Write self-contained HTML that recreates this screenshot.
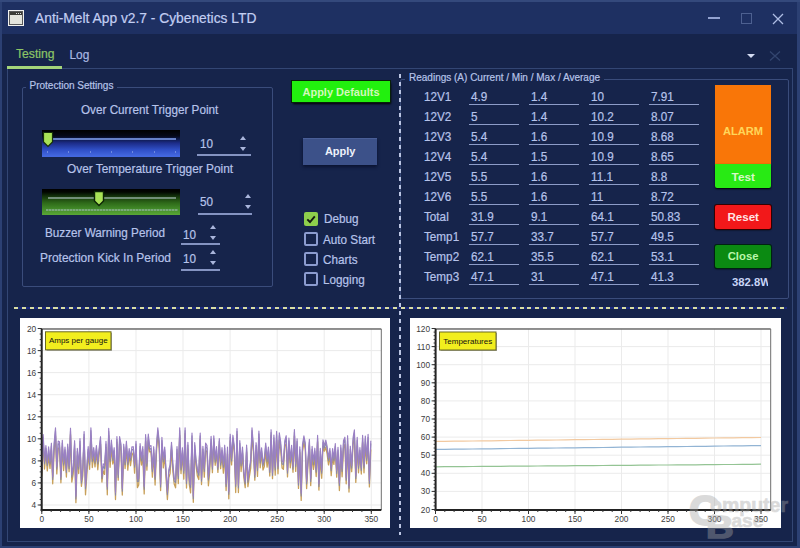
<!DOCTYPE html>
<html><head><meta charset="utf-8">
<style>
*{margin:0;padding:0;box-sizing:border-box}
html,body{width:800px;height:548px;overflow:hidden;background:#2c4073}
body{position:relative;font-family:"Liberation Sans",sans-serif}
.a{position:absolute}
.t{position:absolute;white-space:nowrap;line-height:1;-webkit-text-stroke:0.2px currentColor}
.t[style*="bold"]{-webkit-text-stroke:0}
.arr{position:absolute;width:0;height:0;border-left:3.5px solid transparent;border-right:3.5px solid transparent}
.up{border-bottom:4px solid #aab6dc}
.dn{border-top:4px solid #aab6dc}
</style></head><body>
<div class="a" style="left:0px;top:0px;width:800px;height:548px;background:#2c4073"></div>
<div class="a" style="left:2px;top:2px;width:795px;height:544px;background:#16244b"></div>
<div class="a" style="left:2px;top:2px;width:795px;height:32px;background:#1e3062"></div>
<div class="a" style="left:0px;top:0px;width:800px;height:2px;background:#34497c"></div>
<div class="a" style="left:8px;top:10px;width:16px;height:16px;background:#f2f2f0"></div>
<div class="a" style="left:9px;top:11px;width:14px;height:14px;background:#e4e4dc;border:1px solid #5a5a5a"></div>
<div class="a" style="left:10px;top:12px;width:12px;height:3px;background:#3c3c36"></div>
<div class="a" style="left:16px;top:13px;width:1px;height:1px;background:#ddd"></div><div class="a" style="left:18px;top:13px;width:1px;height:1px;background:#ddd"></div><div class="a" style="left:20px;top:13px;width:1px;height:1px;background:#ddd"></div>
<div class="t" style="left:35px;top:12px;font-size:13.8px;color:#c2cef2;">Anti-Melt App v2.7 - Cybenetics LTD</div>
<div class="a" style="left:708px;top:17px;width:12px;height:1.5px;background:#93a2d0"></div>
<div class="a" style="left:741px;top:13px;width:11px;height:11px;border:1px solid #4d6090"></div>
<svg class="a" style="left:772px;top:13px" width="12" height="12"><path d="M1 1L11 11M11 1L1 11" stroke="#aebde4" stroke-width="1.3"/></svg>
<div class="t" style="left:16px;top:48px;font-size:12.2px;color:#8cc466;">Testing</div>
<div class="t" style="left:69.5px;top:50px;font-size:11.9px;color:#aab8e2;">Log</div>
<div class="a" style="left:7px;top:68px;width:786px;height:474px;border:1px solid #334674"></div>
<div class="a" style="left:7px;top:66px;width:55px;height:2.5px;background:#a4d47a"></div>
<div class="a" style="left:747px;top:54px;width:0;height:0;border-left:4px solid transparent;border-right:4px solid transparent;border-top:4.5px solid #d4dcf2"></div>
<svg class="a" style="left:769px;top:51px" width="12" height="10"><path d="M1 0.5L11 9.5M11 0.5L1 9.5" stroke="#33456f" stroke-width="1.3"/></svg>
<div class="a" style="left:22px;top:87px;width:251px;height:200px;border:1px solid #3a4c7b;border-radius:2px"></div>
<div class="a" style="left:26px;top:80px;width:91px;height:10px;background:#16244b"></div>
<div class="t" style="left:29.5px;top:81px;font-size:10px;color:#b6c3e8;">Protection Settings</div>
<div class="t" style="left:80.5px;top:104px;font-size:12.4px;color:#b6c3ea;transform:scaleX(0.945);transform-origin:0 0;">Over Current Trigger Point</div>
<div class="a" style="left:42px;top:130px;width:138px;height:27px;background:linear-gradient(#000 0px,#050818 6px,#0d1848 9px,#1c2c88 13px,#3050c8 20px,#4468e0 26px)"></div>
<div class="a" style="left:52px;top:138px;width:124px;height:2px;background:#6680c8"></div>
<div class="a" style="left:47.0px;top:151px;width:1px;height:2px;background:#6f8ae0"></div>
<div class="a" style="left:68.3px;top:151px;width:1px;height:2px;background:#6f8ae0"></div>
<div class="a" style="left:89.6px;top:151px;width:1px;height:2px;background:#6f8ae0"></div>
<div class="a" style="left:110.9px;top:151px;width:1px;height:2px;background:#6f8ae0"></div>
<div class="a" style="left:132.2px;top:151px;width:1px;height:2px;background:#6f8ae0"></div>
<div class="a" style="left:153.5px;top:151px;width:1px;height:2px;background:#6f8ae0"></div>
<div class="a" style="left:174.8px;top:151px;width:1px;height:2px;background:#6f8ae0"></div>
<svg class="a" style="left:42px;top:131px" width="12" height="17"><path d="M1.5 1.5H10.5V11L6 15.5L1.5 11Z" fill="#a8e256" stroke="#16300a" stroke-width="1.2"/></svg>
<div class="t" style="left:199.6px;top:138px;font-size:12.4px;color:#b6c3ea;transform:scaleX(0.945);transform-origin:0 0;">10</div>
<div class="arr up" style="left:240px;top:136px"></div><div class="arr dn" style="left:240px;top:147px"></div>
<div class="a" style="left:197px;top:154px;width:54px;height:1.5px;background:#8594c2"></div>
<div class="t" style="left:67px;top:163px;font-size:12.4px;color:#b6c3ea;transform:scaleX(0.958);transform-origin:0 0;">Over Temperature Trigger Point</div>
<div class="a" style="left:42px;top:189px;width:138px;height:26px;background:linear-gradient(#000 0px,#020600 3px,#12300a 7px,#1f4a10 10px,#2e6a1a 14px,#3f8626 19px,#5aa836 26px)"></div>
<div class="a" style="left:48px;top:197px;width:128px;height:2px;background:#728e78"></div>
<div class="a" style="left:46px;top:209px;width:132px;height:2px;background:repeating-linear-gradient(90deg,#7aa87a 0 2px,#5f9a58 2px 3px)"></div>
<svg class="a" style="left:93px;top:190px" width="12" height="17"><path d="M1.5 1.5H10.5V11L6 15.5L1.5 11Z" fill="#a8e256" stroke="#0c2406" stroke-width="1.4"/></svg>
<div class="t" style="left:199.6px;top:196px;font-size:12.4px;color:#b6c3ea;transform:scaleX(0.945);transform-origin:0 0;">50</div>
<div class="arr up" style="left:245px;top:194px"></div><div class="arr dn" style="left:245px;top:205px"></div>
<div class="a" style="left:198px;top:213px;width:54px;height:1.5px;background:#8594c2"></div>
<div class="t" style="left:45.3px;top:227px;font-size:12.4px;color:#b6c3ea;transform:scaleX(0.945);transform-origin:0 0;">Buzzer Warning Period</div>
<div class="t" style="left:182.5px;top:229px;font-size:12.4px;color:#b6c3ea;transform:scaleX(0.945);transform-origin:0 0;">10</div>
<div class="arr up" style="left:210px;top:225px"></div><div class="arr dn" style="left:210px;top:236px"></div>
<div class="a" style="left:181px;top:243px;width:39px;height:1.5px;background:#8594c2"></div>
<div class="t" style="left:40px;top:252px;font-size:12.4px;color:#b6c3ea;transform:scaleX(0.965);transform-origin:0 0;">Protection Kick In Period</div>
<div class="t" style="left:182.5px;top:253px;font-size:12.4px;color:#b6c3ea;transform:scaleX(0.945);transform-origin:0 0;">10</div>
<div class="arr up" style="left:210px;top:250px"></div><div class="arr dn" style="left:210px;top:261px"></div>
<div class="a" style="left:181px;top:269px;width:39px;height:1.5px;background:#8594c2"></div>
<div class="a" style="left:292px;top:81px;width:98px;height:21px;background:#22f00e;box-shadow:0 0 0 1px #08200a,1px 2px 2px #000"></div>
<div class="t" style="left:281px;width:120px;text-align:center;top:87px;font-size:11px;color:#d4f8bc;font-weight:bold;">Apply Defaults</div>
<div class="a" style="left:303px;top:138px;width:74px;height:27px;background:#3c5189;border-top:1px solid #4a5f98;box-shadow:0 2px 3px #0a1230"></div>
<div class="t" style="left:280.2px;width:120px;text-align:center;top:146px;font-size:11px;color:#eef2fb;font-weight:bold;">Apply</div>
<div class="a" style="left:304px;top:212px;width:14px;height:14px;background:#8ecf4c;border-radius:2px"></div>
<svg class="a" style="left:304px;top:212px" width="14" height="14"><path d="M3.3 7.3L6 10L10.8 4.3" fill="none" stroke="#151a10" stroke-width="1.9"/></svg>
<div class="t" style="left:323.5px;top:213px;font-size:12.4px;color:#b6c3ea;transform:scaleX(0.945);transform-origin:0 0;">Debug</div>
<div class="a" style="left:304px;top:232px;width:14px;height:14px;border:2px solid #8c9ccf;border-radius:2px"></div>
<div class="t" style="left:323.3px;top:234px;font-size:12.4px;color:#b6c3ea;transform:scaleX(0.945);transform-origin:0 0;">Auto Start</div>
<div class="a" style="left:304px;top:252px;width:14px;height:14px;border:2px solid #8c9ccf;border-radius:2px"></div>
<div class="t" style="left:323.3px;top:254px;font-size:12.4px;color:#b6c3ea;transform:scaleX(0.945);transform-origin:0 0;">Charts</div>
<div class="a" style="left:304px;top:272px;width:14px;height:14px;border:2px solid #8c9ccf;border-radius:2px"></div>
<div class="t" style="left:323.3px;top:274px;font-size:12.4px;color:#b6c3ea;transform:scaleX(0.945);transform-origin:0 0;">Logging</div>
<div class="a" style="left:400px;top:79px;width:389px;height:220px;border:1px solid #3a4c7b;border-radius:2px"></div>
<div class="a" style="left:405px;top:72px;width:199px;height:10px;background:#16244b"></div>
<div class="t" style="left:409px;top:73px;font-size:10px;color:#b6c3e8;">Readings (A) Current / Min / Max / Average</div>
<div class="t" style="left:423.6px;top:91px;font-size:12.4px;color:#b6c3ea;transform:scaleX(0.945);transform-origin:0 0;">12V1</div>
<div class="t" style="left:470.8px;top:91px;font-size:12.4px;color:#b6c3ea;transform:scaleX(0.945);transform-origin:0 0;">4.9</div>
<div class="a" style="left:468.5px;top:104.2px;width:50px;height:1.3px;background:#8d9cc8"></div>
<div class="t" style="left:530.8px;top:91px;font-size:12.4px;color:#b6c3ea;transform:scaleX(0.945);transform-origin:0 0;">1.4</div>
<div class="a" style="left:528.5px;top:104.2px;width:50px;height:1.3px;background:#8d9cc8"></div>
<div class="t" style="left:590.8px;top:91px;font-size:12.4px;color:#b6c3ea;transform:scaleX(0.945);transform-origin:0 0;">10</div>
<div class="a" style="left:588.5px;top:104.2px;width:50px;height:1.3px;background:#8d9cc8"></div>
<div class="t" style="left:650.8px;top:91px;font-size:12.4px;color:#b6c3ea;transform:scaleX(0.945);transform-origin:0 0;">7.91</div>
<div class="a" style="left:648.5px;top:104.2px;width:50px;height:1.3px;background:#8d9cc8"></div>
<div class="t" style="left:423.6px;top:111px;font-size:12.4px;color:#b6c3ea;transform:scaleX(0.945);transform-origin:0 0;">12V2</div>
<div class="t" style="left:470.8px;top:111px;font-size:12.4px;color:#b6c3ea;transform:scaleX(0.945);transform-origin:0 0;">5</div>
<div class="a" style="left:468.5px;top:124.2px;width:50px;height:1.3px;background:#8d9cc8"></div>
<div class="t" style="left:530.8px;top:111px;font-size:12.4px;color:#b6c3ea;transform:scaleX(0.945);transform-origin:0 0;">1.4</div>
<div class="a" style="left:528.5px;top:124.2px;width:50px;height:1.3px;background:#8d9cc8"></div>
<div class="t" style="left:590.8px;top:111px;font-size:12.4px;color:#b6c3ea;transform:scaleX(0.945);transform-origin:0 0;">10.2</div>
<div class="a" style="left:588.5px;top:124.2px;width:50px;height:1.3px;background:#8d9cc8"></div>
<div class="t" style="left:650.8px;top:111px;font-size:12.4px;color:#b6c3ea;transform:scaleX(0.945);transform-origin:0 0;">8.07</div>
<div class="a" style="left:648.5px;top:124.2px;width:50px;height:1.3px;background:#8d9cc8"></div>
<div class="t" style="left:423.6px;top:131px;font-size:12.4px;color:#b6c3ea;transform:scaleX(0.945);transform-origin:0 0;">12V3</div>
<div class="t" style="left:470.8px;top:131px;font-size:12.4px;color:#b6c3ea;transform:scaleX(0.945);transform-origin:0 0;">5.4</div>
<div class="a" style="left:468.5px;top:144.2px;width:50px;height:1.3px;background:#8d9cc8"></div>
<div class="t" style="left:530.8px;top:131px;font-size:12.4px;color:#b6c3ea;transform:scaleX(0.945);transform-origin:0 0;">1.6</div>
<div class="a" style="left:528.5px;top:144.2px;width:50px;height:1.3px;background:#8d9cc8"></div>
<div class="t" style="left:590.8px;top:131px;font-size:12.4px;color:#b6c3ea;transform:scaleX(0.945);transform-origin:0 0;">10.9</div>
<div class="a" style="left:588.5px;top:144.2px;width:50px;height:1.3px;background:#8d9cc8"></div>
<div class="t" style="left:650.8px;top:131px;font-size:12.4px;color:#b6c3ea;transform:scaleX(0.945);transform-origin:0 0;">8.68</div>
<div class="a" style="left:648.5px;top:144.2px;width:50px;height:1.3px;background:#8d9cc8"></div>
<div class="t" style="left:423.6px;top:151px;font-size:12.4px;color:#b6c3ea;transform:scaleX(0.945);transform-origin:0 0;">12V4</div>
<div class="t" style="left:470.8px;top:151px;font-size:12.4px;color:#b6c3ea;transform:scaleX(0.945);transform-origin:0 0;">5.4</div>
<div class="a" style="left:468.5px;top:164.2px;width:50px;height:1.3px;background:#8d9cc8"></div>
<div class="t" style="left:530.8px;top:151px;font-size:12.4px;color:#b6c3ea;transform:scaleX(0.945);transform-origin:0 0;">1.5</div>
<div class="a" style="left:528.5px;top:164.2px;width:50px;height:1.3px;background:#8d9cc8"></div>
<div class="t" style="left:590.8px;top:151px;font-size:12.4px;color:#b6c3ea;transform:scaleX(0.945);transform-origin:0 0;">10.9</div>
<div class="a" style="left:588.5px;top:164.2px;width:50px;height:1.3px;background:#8d9cc8"></div>
<div class="t" style="left:650.8px;top:151px;font-size:12.4px;color:#b6c3ea;transform:scaleX(0.945);transform-origin:0 0;">8.65</div>
<div class="a" style="left:648.5px;top:164.2px;width:50px;height:1.3px;background:#8d9cc8"></div>
<div class="t" style="left:423.6px;top:171px;font-size:12.4px;color:#b6c3ea;transform:scaleX(0.945);transform-origin:0 0;">12V5</div>
<div class="t" style="left:470.8px;top:171px;font-size:12.4px;color:#b6c3ea;transform:scaleX(0.945);transform-origin:0 0;">5.5</div>
<div class="a" style="left:468.5px;top:184.2px;width:50px;height:1.3px;background:#8d9cc8"></div>
<div class="t" style="left:530.8px;top:171px;font-size:12.4px;color:#b6c3ea;transform:scaleX(0.945);transform-origin:0 0;">1.6</div>
<div class="a" style="left:528.5px;top:184.2px;width:50px;height:1.3px;background:#8d9cc8"></div>
<div class="t" style="left:590.8px;top:171px;font-size:12.4px;color:#b6c3ea;transform:scaleX(0.945);transform-origin:0 0;">11.1</div>
<div class="a" style="left:588.5px;top:184.2px;width:50px;height:1.3px;background:#8d9cc8"></div>
<div class="t" style="left:650.8px;top:171px;font-size:12.4px;color:#b6c3ea;transform:scaleX(0.945);transform-origin:0 0;">8.8</div>
<div class="a" style="left:648.5px;top:184.2px;width:50px;height:1.3px;background:#8d9cc8"></div>
<div class="t" style="left:423.6px;top:191px;font-size:12.4px;color:#b6c3ea;transform:scaleX(0.945);transform-origin:0 0;">12V6</div>
<div class="t" style="left:470.8px;top:191px;font-size:12.4px;color:#b6c3ea;transform:scaleX(0.945);transform-origin:0 0;">5.5</div>
<div class="a" style="left:468.5px;top:204.2px;width:50px;height:1.3px;background:#8d9cc8"></div>
<div class="t" style="left:530.8px;top:191px;font-size:12.4px;color:#b6c3ea;transform:scaleX(0.945);transform-origin:0 0;">1.6</div>
<div class="a" style="left:528.5px;top:204.2px;width:50px;height:1.3px;background:#8d9cc8"></div>
<div class="t" style="left:590.8px;top:191px;font-size:12.4px;color:#b6c3ea;transform:scaleX(0.945);transform-origin:0 0;">11</div>
<div class="a" style="left:588.5px;top:204.2px;width:50px;height:1.3px;background:#8d9cc8"></div>
<div class="t" style="left:650.8px;top:191px;font-size:12.4px;color:#b6c3ea;transform:scaleX(0.945);transform-origin:0 0;">8.72</div>
<div class="a" style="left:648.5px;top:204.2px;width:50px;height:1.3px;background:#8d9cc8"></div>
<div class="t" style="left:423.6px;top:211px;font-size:12.4px;color:#b6c3ea;transform:scaleX(0.945);transform-origin:0 0;">Total</div>
<div class="t" style="left:470.8px;top:211px;font-size:12.4px;color:#b6c3ea;transform:scaleX(0.945);transform-origin:0 0;">31.9</div>
<div class="a" style="left:468.5px;top:224.2px;width:50px;height:1.3px;background:#8d9cc8"></div>
<div class="t" style="left:530.8px;top:211px;font-size:12.4px;color:#b6c3ea;transform:scaleX(0.945);transform-origin:0 0;">9.1</div>
<div class="a" style="left:528.5px;top:224.2px;width:50px;height:1.3px;background:#8d9cc8"></div>
<div class="t" style="left:590.8px;top:211px;font-size:12.4px;color:#b6c3ea;transform:scaleX(0.945);transform-origin:0 0;">64.1</div>
<div class="a" style="left:588.5px;top:224.2px;width:50px;height:1.3px;background:#8d9cc8"></div>
<div class="t" style="left:650.8px;top:211px;font-size:12.4px;color:#b6c3ea;transform:scaleX(0.945);transform-origin:0 0;">50.83</div>
<div class="a" style="left:648.5px;top:224.2px;width:50px;height:1.3px;background:#8d9cc8"></div>
<div class="t" style="left:423.6px;top:231px;font-size:12.4px;color:#b6c3ea;transform:scaleX(0.945);transform-origin:0 0;">Temp1</div>
<div class="t" style="left:470.8px;top:231px;font-size:12.4px;color:#b6c3ea;transform:scaleX(0.945);transform-origin:0 0;">57.7</div>
<div class="a" style="left:468.5px;top:244.2px;width:50px;height:1.3px;background:#8d9cc8"></div>
<div class="t" style="left:530.8px;top:231px;font-size:12.4px;color:#b6c3ea;transform:scaleX(0.945);transform-origin:0 0;">33.7</div>
<div class="a" style="left:528.5px;top:244.2px;width:50px;height:1.3px;background:#8d9cc8"></div>
<div class="t" style="left:590.8px;top:231px;font-size:12.4px;color:#b6c3ea;transform:scaleX(0.945);transform-origin:0 0;">57.7</div>
<div class="a" style="left:588.5px;top:244.2px;width:50px;height:1.3px;background:#8d9cc8"></div>
<div class="t" style="left:650.8px;top:231px;font-size:12.4px;color:#b6c3ea;transform:scaleX(0.945);transform-origin:0 0;">49.5</div>
<div class="a" style="left:648.5px;top:244.2px;width:50px;height:1.3px;background:#8d9cc8"></div>
<div class="t" style="left:423.6px;top:251px;font-size:12.4px;color:#b6c3ea;transform:scaleX(0.945);transform-origin:0 0;">Temp2</div>
<div class="t" style="left:470.8px;top:251px;font-size:12.4px;color:#b6c3ea;transform:scaleX(0.945);transform-origin:0 0;">62.1</div>
<div class="a" style="left:468.5px;top:264.2px;width:50px;height:1.3px;background:#8d9cc8"></div>
<div class="t" style="left:530.8px;top:251px;font-size:12.4px;color:#b6c3ea;transform:scaleX(0.945);transform-origin:0 0;">35.5</div>
<div class="a" style="left:528.5px;top:264.2px;width:50px;height:1.3px;background:#8d9cc8"></div>
<div class="t" style="left:590.8px;top:251px;font-size:12.4px;color:#b6c3ea;transform:scaleX(0.945);transform-origin:0 0;">62.1</div>
<div class="a" style="left:588.5px;top:264.2px;width:50px;height:1.3px;background:#8d9cc8"></div>
<div class="t" style="left:650.8px;top:251px;font-size:12.4px;color:#b6c3ea;transform:scaleX(0.945);transform-origin:0 0;">53.1</div>
<div class="a" style="left:648.5px;top:264.2px;width:50px;height:1.3px;background:#8d9cc8"></div>
<div class="t" style="left:423.6px;top:271px;font-size:12.4px;color:#b6c3ea;transform:scaleX(0.945);transform-origin:0 0;">Temp3</div>
<div class="t" style="left:470.8px;top:271px;font-size:12.4px;color:#b6c3ea;transform:scaleX(0.945);transform-origin:0 0;">47.1</div>
<div class="a" style="left:468.5px;top:284.2px;width:50px;height:1.3px;background:#8d9cc8"></div>
<div class="t" style="left:530.8px;top:271px;font-size:12.4px;color:#b6c3ea;transform:scaleX(0.945);transform-origin:0 0;">31</div>
<div class="a" style="left:528.5px;top:284.2px;width:50px;height:1.3px;background:#8d9cc8"></div>
<div class="t" style="left:590.8px;top:271px;font-size:12.4px;color:#b6c3ea;transform:scaleX(0.945);transform-origin:0 0;">47.1</div>
<div class="a" style="left:588.5px;top:284.2px;width:50px;height:1.3px;background:#8d9cc8"></div>
<div class="t" style="left:650.8px;top:271px;font-size:12.4px;color:#b6c3ea;transform:scaleX(0.945);transform-origin:0 0;">41.3</div>
<div class="a" style="left:648.5px;top:284.2px;width:50px;height:1.3px;background:#8d9cc8"></div>
<div class="a" style="left:715px;top:85px;width:56px;height:79px;background:#f97608"></div>
<div class="t" style="left:683px;width:120px;text-align:center;top:126px;font-size:11.1px;color:#ffd65a;font-weight:bold;">ALARM</div>
<div class="a" style="left:715px;top:164px;width:56px;height:23.5px;background:#28ea14;border-radius:0 0 2px 2px;box-shadow:0 1px 2px #000"></div>
<div class="t" style="left:683.3px;width:120px;text-align:center;top:172px;font-size:11.8px;color:#d8f8c8;font-weight:bold;">Test</div>
<div class="a" style="left:715px;top:205px;width:56px;height:23.5px;background:#f2181a;border-radius:2px;box-shadow:0 0 0 1px #300,0 1px 2px #000"></div>
<div class="t" style="left:683.2px;width:120px;text-align:center;top:211px;font-size:11.6px;color:#ffe4e4;font-weight:bold;">Reset</div>
<div class="a" style="left:715px;top:244.5px;width:56px;height:23.5px;background:#0b8a12;border-radius:2px;box-shadow:0 0 0 1px #021,0 1px 2px #000"></div>
<div class="t" style="left:683.1px;width:120px;text-align:center;top:251px;font-size:11.3px;color:#baf6aa;font-weight:bold;">Close</div>
<div class="a" style="left:732px;top:270px;width:36px;height:20px;overflow:hidden">
<div class="t" style="left:0px;top:7px;font-size:11.3px;color:#c8d4f6;font-weight:bold;">382.8W</div>
</div>
<div class="a" style="left:399px;top:74px;width:2px;height:461px;background:repeating-linear-gradient(#bcc6e4 0 4px,transparent 4px 7.9px)"></div>
<div class="a" style="left:14px;top:307px;width:773px;height:2px;background:repeating-linear-gradient(90deg,#dadea4 0 4px,#1c2a80 4px 7.9px)"></div>
<div class="a" style="left:20px;top:318px;width:370px;height:210px;background:#fff"></div>
<div class="a" style="left:409.5px;top:318px;width:371px;height:210px;background:#fff"></div>
<svg class="a" style="left:20px;top:318px" width="370" height="210">
<line x1="21.7" x2="361.3" y1="187.0" y2="187.0" stroke="#ebebeb" stroke-width="1"/>
<line x1="21.7" x2="361.3" y1="164.9" y2="164.9" stroke="#ebebeb" stroke-width="1"/>
<line x1="21.7" x2="361.3" y1="142.9" y2="142.9" stroke="#ebebeb" stroke-width="1"/>
<line x1="21.7" x2="361.3" y1="120.8" y2="120.8" stroke="#ebebeb" stroke-width="1"/>
<line x1="21.7" x2="361.3" y1="98.8" y2="98.8" stroke="#ebebeb" stroke-width="1"/>
<line x1="21.7" x2="361.3" y1="76.7" y2="76.7" stroke="#ebebeb" stroke-width="1"/>
<line x1="21.7" x2="361.3" y1="54.6" y2="54.6" stroke="#ebebeb" stroke-width="1"/>
<line x1="21.7" x2="361.3" y1="32.6" y2="32.6" stroke="#ebebeb" stroke-width="1"/>
<line x1="21.7" x2="361.3" y1="10.5" y2="10.5" stroke="#ebebeb" stroke-width="1"/>
<line x1="21.8" x2="21.8" y1="11" y2="192" stroke="#ebebeb" stroke-width="1"/>
<line x1="68.9" x2="68.9" y1="11" y2="192" stroke="#ebebeb" stroke-width="1"/>
<line x1="116.0" x2="116.0" y1="11" y2="192" stroke="#ebebeb" stroke-width="1"/>
<line x1="163.0" x2="163.0" y1="11" y2="192" stroke="#ebebeb" stroke-width="1"/>
<line x1="210.1" x2="210.1" y1="11" y2="192" stroke="#ebebeb" stroke-width="1"/>
<line x1="257.2" x2="257.2" y1="11" y2="192" stroke="#ebebeb" stroke-width="1"/>
<line x1="304.2" x2="304.2" y1="11" y2="192" stroke="#ebebeb" stroke-width="1"/>
<line x1="351.3" x2="351.3" y1="11" y2="192" stroke="#ebebeb" stroke-width="1"/>
<path d="M21.8,158.4 L23.2,122.8 L24.5,151.0 L25.9,133.8 L27.3,152.9 L28.6,137.6 L30.0,150.4 L31.4,132.0 L32.7,165.8 L34.1,133.4 L35.5,117.8 L36.8,155.9 L38.2,130.7 L39.5,129.5 L40.9,164.8 L42.3,128.6 L43.6,152.5 L45.0,135.6 L46.4,159.0 L47.7,131.7 L49.1,153.7 L50.5,116.6 L51.8,164.1 L53.2,155.9 L54.6,130.5 L55.9,184.7 L57.3,137.7 L58.7,155.5 L60.0,127.7 L61.4,168.3 L62.8,157.3 L64.1,119.7 L65.5,176.8 L66.9,156.2 L68.2,134.1 L69.6,151.3 L70.9,118.0 L72.3,149.5 L73.7,136.5 L75.0,148.9 L76.4,133.8 L77.8,151.8 L79.1,136.8 L80.5,126.1 L81.9,164.1 L83.2,152.9 L84.6,156.4 L86.0,129.3 L87.3,176.8 L88.7,117.6 L90.1,149.3 L91.4,129.8 L92.8,146.0 L94.2,138.1 L95.5,181.6 L96.9,124.2 L98.2,162.2 L99.6,125.6 L101.0,133.1 L102.3,177.0 L103.7,132.2 L105.1,150.5 L106.4,129.7 L107.8,152.2 L109.2,136.0 L110.5,147.7 L111.9,137.2 L113.3,134.6 L114.6,155.2 L116.0,131.2 L117.4,169.6 L118.7,167.0 L120.1,132.4 L121.5,147.0 L122.8,137.5 L124.2,175.9 L125.6,123.3 L126.9,152.2 L128.3,122.5 L129.6,133.9 L131.0,133.5 L132.4,159.2 L133.7,135.2 L135.1,167.0 L136.5,133.4 L137.8,116.2 L139.2,130.2 L140.6,172.5 L141.9,126.2 L143.3,149.9 L144.7,137.5 L146.0,159.5 L147.4,181.5 L148.8,159.9 L150.1,155.4 L151.5,131.6 L152.9,153.6 L154.2,166.0 L155.6,169.8 L157.0,135.5 L158.3,165.6 L159.7,117.4 L161.0,155.6 L162.4,135.4 L163.8,161.1 L165.1,115.7 L166.5,170.1 L167.9,131.0 L169.2,165.6 L170.6,174.8 L172.0,123.8 L173.3,184.3 L174.7,132.3 L176.1,148.5 L177.4,158.1 L178.8,161.6 L180.2,121.1 L181.5,166.5 L182.9,134.5 L184.3,159.1 L185.6,132.3 L187.0,133.9 L188.4,167.8 L189.7,153.7 L191.1,125.3 L192.4,154.6 L193.8,123.9 L195.2,147.3 L196.5,135.1 L197.9,154.4 L199.3,126.9 L200.6,150.7 L202.0,136.9 L203.4,155.2 L204.7,135.2 L206.1,172.6 L207.5,136.0 L208.8,180.8 L210.2,123.0 L211.6,146.9 L212.9,122.9 L214.3,134.3 L215.7,174.6 L217.0,116.4 L218.4,174.5 L219.8,130.2 L221.1,153.5 L222.5,135.3 L223.8,159.1 L225.2,169.6 L226.6,133.8 L227.9,168.7 L229.3,158.9 L230.7,150.1 L232.0,118.2 L233.4,133.4 L234.8,162.1 L236.1,132.5 L237.5,158.4 L238.9,120.2 L240.2,149.8 L241.6,135.4 L243.0,152.0 L244.3,148.6 L245.7,133.4 L247.1,149.2 L248.4,137.7 L249.8,158.0 L251.1,117.6 L252.5,160.7 L253.9,124.2 L255.2,157.1 L256.6,122.1 L258.0,155.8 L259.3,122.5 L260.7,132.3 L262.1,150.1 L263.4,151.4 L264.8,128.2 L266.2,125.8 L267.5,158.9 L268.9,128.5 L270.3,149.8 L271.6,134.0 L273.0,154.3 L274.4,117.8 L275.7,153.4 L277.1,128.5 L278.5,170.4 L279.8,134.6 L281.2,182.4 L282.5,133.7 L283.9,124.6 L285.3,131.1 L286.6,170.6 L288.0,146.1 L289.4,127.9 L290.7,167.6 L292.1,137.1 L293.5,151.4 L294.8,138.7 L296.2,158.5 L297.6,123.7 L298.9,172.1 L300.3,138.9 L301.7,160.3 L303.0,128.3 L304.4,133.2 L305.8,129.2 L307.1,135.8 L308.5,146.9 L309.9,136.7 L311.2,157.6 L312.6,139.2 L313.9,146.4 L315.3,131.1 L316.7,159.2 L318.0,136.2 L319.4,172.6 L320.8,133.2 L322.1,158.8 L323.5,130.4 L324.9,126.4 L326.2,165.8 L327.6,126.4 L329.0,174.1 L330.3,136.4 L331.7,153.7 L333.1,125.8 L334.4,119.9 L335.8,164.4 L337.2,127.9 L338.5,154.8 L339.9,135.6 L341.3,156.0 L342.6,124.3 L344.0,154.8 L345.3,126.6 L346.7,145.8 L348.1,123.2 L349.4,168.9 L350.8,131.5" fill="none" stroke="#c8a05a" stroke-width="1.3" stroke-linejoin="round"/>
<path d="M21.8,155.4 L23.2,119.2 L24.5,145.9 L25.9,130.4 L27.3,147.7 L28.6,131.6 L30.0,146.0 L31.4,128.0 L32.7,161.5 L34.1,128.4 L35.5,112.5 L36.8,151.1 L38.2,125.8 L39.5,126.5 L40.9,161.5 L42.3,125.0 L43.6,147.3 L45.0,131.9 L46.4,154.4 L47.7,128.9 L49.1,150.8 L50.5,113.0 L51.8,159.2 L53.2,150.8 L54.6,125.5 L55.9,180.9 L57.3,133.2 L58.7,151.2 L60.0,123.4 L61.4,165.2 L62.8,151.6 L64.1,116.3 L65.5,170.8 L66.9,150.4 L68.2,131.3 L69.6,147.0 L70.9,112.5 L72.3,143.6 L73.7,132.2 L75.0,145.2 L76.4,130.4 L77.8,145.9 L79.1,133.3 L80.5,121.4 L81.9,160.8 L83.2,148.4 L84.6,150.5 L86.0,126.1 L87.3,171.3 L88.7,113.2 L90.1,143.6 L91.4,124.7 L92.8,142.4 L94.2,132.4 L95.5,177.3 L96.9,121.4 L98.2,159.5 L99.6,121.2 L101.0,128.9 L102.3,173.2 L103.7,128.9 L105.1,146.6 L106.4,125.9 L107.8,146.7 L109.2,133.3 L110.5,142.4 L111.9,131.7 L113.3,131.4 L114.6,149.3 L116.0,126.1 L117.4,163.8 L118.7,163.3 L120.1,128.4 L121.5,143.0 L122.8,131.4 L124.2,171.2 L125.6,119.3 L126.9,148.1 L128.3,118.8 L129.6,131.0 L131.0,130.4 L132.4,153.7 L133.7,131.4 L135.1,161.2 L136.5,129.8 L137.8,112.5 L139.2,125.8 L140.6,169.1 L141.9,122.2 L143.3,143.9 L144.7,131.8 L146.0,154.1 L147.4,176.7 L148.8,154.1 L150.1,149.5 L151.5,127.1 L152.9,148.4 L154.2,163.0 L155.6,164.6 L157.0,131.2 L158.3,160.4 L159.7,112.5 L161.0,151.9 L162.4,132.5 L163.8,155.3 L165.1,112.5 L166.5,165.8 L167.9,127.1 L169.2,161.8 L170.6,169.6 L172.0,117.8 L173.3,180.7 L174.7,127.4 L176.1,144.8 L177.4,153.5 L178.8,157.6 L180.2,117.8 L181.5,163.2 L182.9,131.1 L184.3,153.4 L185.6,127.9 L187.0,130.4 L188.4,162.1 L189.7,147.6 L191.1,121.1 L192.4,151.3 L193.8,120.5 L195.2,144.3 L196.5,131.2 L197.9,151.4 L199.3,123.4 L200.6,147.1 L202.0,132.3 L203.4,149.5 L204.7,130.0 L206.1,168.5 L207.5,131.8 L208.8,176.3 L210.2,119.0 L211.6,143.0 L212.9,120.0 L214.3,130.6 L215.7,168.6 L217.0,113.2 L218.4,170.0 L219.8,125.4 L221.1,147.9 L222.5,131.8 L223.8,155.4 L225.2,166.0 L226.6,129.7 L227.9,164.5 L229.3,153.0 L230.7,144.5 L232.0,112.5 L233.4,130.6 L234.8,159.2 L236.1,127.4 L237.5,152.6 L238.9,115.9 L240.2,145.1 L241.6,132.7 L243.0,147.9 L244.3,142.8 L245.7,127.9 L247.1,143.6 L248.4,131.8 L249.8,154.4 L251.1,114.5 L252.5,157.4 L253.9,119.7 L255.2,152.1 L256.6,116.2 L258.0,150.7 L259.3,117.6 L260.7,127.0 L262.1,145.9 L263.4,146.8 L264.8,125.3 L266.2,120.5 L267.5,155.3 L268.9,122.7 L270.3,145.0 L271.6,130.2 L273.0,151.2 L274.4,114.2 L275.7,148.6 L277.1,123.4 L278.5,167.3 L279.8,131.6 L281.2,177.9 L282.5,129.0 L283.9,120.6 L285.3,127.6 L286.6,165.9 L288.0,143.3 L289.4,124.1 L290.7,163.4 L292.1,131.2 L293.5,146.6 L294.8,133.0 L296.2,154.2 L297.6,120.2 L298.9,168.6 L300.3,133.0 L301.7,155.2 L303.0,124.6 L304.4,130.3 L305.8,124.8 L307.1,130.9 L308.5,142.8 L309.9,133.1 L311.2,152.7 L312.6,133.4 L313.9,142.9 L315.3,128.3 L316.7,155.4 L318.0,132.0 L319.4,167.6 L320.8,129.8 L322.1,153.5 L323.5,125.2 L324.9,122.0 L326.2,162.3 L327.6,120.4 L329.0,170.3 L330.3,131.0 L331.7,150.1 L333.1,122.3 L334.4,114.6 L335.8,160.6 L337.2,122.0 L338.5,150.4 L339.9,132.2 L341.3,152.5 L342.6,120.2 L344.0,149.9 L345.3,120.8 L346.7,142.5 L348.1,119.2 L349.4,165.4 L350.8,125.5" fill="none" stroke="#8888a6" stroke-width="1.1" stroke-linejoin="round"/>
<path d="M21.8,152.6 L23.2,116.5 L24.5,143.1 L25.9,127.6 L27.3,144.9 L28.6,128.9 L30.0,143.3 L31.4,125.2 L32.7,158.7 L34.1,125.6 L35.5,109.8 L36.8,148.4 L38.2,123.1 L39.5,123.7 L40.9,158.8 L42.3,122.3 L43.6,144.6 L45.0,129.1 L46.4,151.6 L47.7,126.1 L49.1,148.0 L50.5,110.2 L51.8,156.4 L53.2,148.1 L54.6,122.7 L55.9,178.2 L57.3,130.4 L58.7,148.4 L60.0,120.6 L61.4,162.4 L62.8,148.9 L64.1,113.5 L65.5,168.0 L66.9,147.6 L68.2,128.5 L69.6,144.3 L70.9,109.8 L72.3,140.8 L73.7,129.5 L75.0,142.4 L76.4,127.6 L77.8,143.2 L79.1,130.6 L80.5,118.7 L81.9,158.1 L83.2,145.7 L84.6,147.8 L86.0,123.4 L87.3,168.6 L88.7,110.4 L90.1,140.8 L91.4,122.0 L92.8,139.7 L94.2,129.7 L95.5,174.5 L96.9,118.6 L98.2,156.7 L99.6,118.5 L101.0,126.1 L102.3,170.5 L103.7,126.2 L105.1,143.9 L106.4,123.2 L107.8,143.9 L109.2,130.5 L110.5,139.7 L111.9,128.9 L113.3,128.7 L114.6,146.6 L116.0,123.3 L117.4,161.1 L118.7,160.5 L120.1,125.6 L121.5,140.2 L122.8,128.6 L124.2,168.5 L125.6,116.6 L126.9,145.3 L128.3,116.1 L129.6,128.2 L131.0,127.6 L132.4,150.9 L133.7,128.7 L135.1,158.4 L136.5,127.0 L137.8,109.8 L139.2,123.0 L140.6,166.3 L141.9,119.4 L143.3,141.2 L144.7,129.0 L146.0,151.3 L147.4,173.9 L148.8,151.4 L150.1,146.8 L151.5,124.3 L152.9,145.7 L154.2,160.3 L155.6,161.9 L157.0,128.5 L158.3,157.6 L159.7,109.8 L161.0,149.2 L162.4,129.7 L163.8,152.5 L165.1,109.8 L166.5,163.0 L167.9,124.4 L169.2,159.1 L170.6,166.8 L172.0,115.0 L173.3,177.9 L174.7,124.6 L176.1,142.0 L177.4,150.7 L178.8,154.8 L180.2,115.0 L181.5,160.4 L182.9,128.3 L184.3,150.6 L185.6,125.1 L187.0,127.6 L188.4,159.3 L189.7,144.9 L191.1,118.3 L192.4,148.6 L193.8,117.8 L195.2,141.5 L196.5,128.5 L197.9,148.6 L199.3,120.6 L200.6,144.3 L202.0,129.5 L203.4,146.7 L204.7,127.2 L206.1,165.8 L207.5,129.1 L208.8,173.6 L210.2,116.2 L211.6,140.2 L212.9,117.2 L214.3,127.9 L215.7,165.9 L217.0,110.5 L218.4,167.3 L219.8,122.6 L221.1,145.2 L222.5,129.1 L223.8,152.7 L225.2,163.2 L226.6,127.0 L227.9,161.7 L229.3,150.2 L230.7,141.8 L232.0,109.8 L233.4,127.8 L234.8,156.5 L236.1,124.7 L237.5,149.9 L238.9,113.1 L240.2,142.3 L241.6,129.9 L243.0,145.2 L244.3,140.0 L245.7,125.1 L247.1,140.9 L248.4,129.0 L249.8,151.6 L251.1,111.7 L252.5,154.7 L253.9,117.0 L255.2,149.3 L256.6,113.4 L258.0,147.9 L259.3,114.8 L260.7,124.2 L262.1,143.1 L263.4,144.1 L264.8,122.6 L266.2,117.7 L267.5,152.6 L268.9,120.0 L270.3,142.2 L271.6,127.4 L273.0,148.4 L274.4,111.5 L275.7,145.8 L277.1,120.7 L278.5,164.6 L279.8,128.8 L281.2,175.2 L282.5,126.3 L283.9,117.8 L285.3,124.9 L286.6,163.1 L288.0,140.6 L289.4,121.4 L290.7,160.6 L292.1,128.4 L293.5,143.8 L294.8,130.2 L296.2,151.4 L297.6,117.4 L298.9,165.8 L300.3,130.3 L301.7,152.4 L303.0,121.8 L304.4,127.6 L305.8,122.1 L307.1,128.1 L308.5,140.0 L309.9,130.3 L311.2,149.9 L312.6,130.6 L313.9,140.2 L315.3,125.5 L316.7,152.6 L318.0,129.3 L319.4,164.9 L320.8,127.1 L322.1,150.7 L323.5,122.4 L324.9,119.2 L326.2,159.6 L327.6,117.7 L329.0,167.6 L330.3,128.2 L331.7,147.4 L333.1,119.6 L334.4,111.9 L335.8,157.9 L337.2,119.3 L338.5,147.7 L339.9,129.5 L341.3,149.7 L342.6,117.4 L344.0,147.1 L345.3,118.0 L346.7,139.8 L348.1,116.4 L349.4,162.7 L350.8,122.8" fill="none" stroke="#9a80c4" stroke-width="1.15" stroke-linejoin="round"/>
<line x1="21.7" x2="361.3" y1="11" y2="11" stroke="#6e6e6e" stroke-width="1.5"/>
<line x1="361.3" x2="361.3" y1="11" y2="192" stroke="#6e6e6e" stroke-width="1"/>
<line x1="21.7" x2="21.7" y1="11" y2="193" stroke="#222" stroke-width="2"/>
<line x1="20.7" x2="361.3" y1="192" y2="192" stroke="#222" stroke-width="2"/>
<line x1="19.7" x2="21.7" y1="187.0" y2="187.0" stroke="#333" stroke-width="1"/>
<line x1="19.7" x2="21.7" y1="181.5" y2="181.5" stroke="#333" stroke-width="1"/>
<line x1="19.7" x2="21.7" y1="176.0" y2="176.0" stroke="#333" stroke-width="1"/>
<line x1="19.7" x2="21.7" y1="170.5" y2="170.5" stroke="#333" stroke-width="1"/>
<line x1="19.7" x2="21.7" y1="164.9" y2="164.9" stroke="#333" stroke-width="1"/>
<line x1="19.7" x2="21.7" y1="159.4" y2="159.4" stroke="#333" stroke-width="1"/>
<line x1="19.7" x2="21.7" y1="153.9" y2="153.9" stroke="#333" stroke-width="1"/>
<line x1="19.7" x2="21.7" y1="148.4" y2="148.4" stroke="#333" stroke-width="1"/>
<line x1="19.7" x2="21.7" y1="142.9" y2="142.9" stroke="#333" stroke-width="1"/>
<line x1="19.7" x2="21.7" y1="137.4" y2="137.4" stroke="#333" stroke-width="1"/>
<line x1="19.7" x2="21.7" y1="131.8" y2="131.8" stroke="#333" stroke-width="1"/>
<line x1="19.7" x2="21.7" y1="126.3" y2="126.3" stroke="#333" stroke-width="1"/>
<line x1="19.7" x2="21.7" y1="120.8" y2="120.8" stroke="#333" stroke-width="1"/>
<line x1="19.7" x2="21.7" y1="115.3" y2="115.3" stroke="#333" stroke-width="1"/>
<line x1="19.7" x2="21.7" y1="109.8" y2="109.8" stroke="#333" stroke-width="1"/>
<line x1="19.7" x2="21.7" y1="104.3" y2="104.3" stroke="#333" stroke-width="1"/>
<line x1="19.7" x2="21.7" y1="98.8" y2="98.8" stroke="#333" stroke-width="1"/>
<line x1="19.7" x2="21.7" y1="93.2" y2="93.2" stroke="#333" stroke-width="1"/>
<line x1="19.7" x2="21.7" y1="87.7" y2="87.7" stroke="#333" stroke-width="1"/>
<line x1="19.7" x2="21.7" y1="82.2" y2="82.2" stroke="#333" stroke-width="1"/>
<line x1="19.7" x2="21.7" y1="76.7" y2="76.7" stroke="#333" stroke-width="1"/>
<line x1="19.7" x2="21.7" y1="71.2" y2="71.2" stroke="#333" stroke-width="1"/>
<line x1="19.7" x2="21.7" y1="65.7" y2="65.7" stroke="#333" stroke-width="1"/>
<line x1="19.7" x2="21.7" y1="60.2" y2="60.2" stroke="#333" stroke-width="1"/>
<line x1="19.7" x2="21.7" y1="54.6" y2="54.6" stroke="#333" stroke-width="1"/>
<line x1="19.7" x2="21.7" y1="49.1" y2="49.1" stroke="#333" stroke-width="1"/>
<line x1="19.7" x2="21.7" y1="43.6" y2="43.6" stroke="#333" stroke-width="1"/>
<line x1="19.7" x2="21.7" y1="38.1" y2="38.1" stroke="#333" stroke-width="1"/>
<line x1="19.7" x2="21.7" y1="32.6" y2="32.6" stroke="#333" stroke-width="1"/>
<line x1="19.7" x2="21.7" y1="27.1" y2="27.1" stroke="#333" stroke-width="1"/>
<line x1="19.7" x2="21.7" y1="21.6" y2="21.6" stroke="#333" stroke-width="1"/>
<line x1="19.7" x2="21.7" y1="16.0" y2="16.0" stroke="#333" stroke-width="1"/>
<line x1="19.7" x2="21.7" y1="10.5" y2="10.5" stroke="#333" stroke-width="1"/>
<line x1="17.7" x2="21.7" y1="187.0" y2="187.0" stroke="#333" stroke-width="1"/>
<text x="16.2" y="190.0" font-family="Liberation Sans" font-size="8.3" fill="#3c3c3c" text-anchor="end">4</text>
<line x1="17.7" x2="21.7" y1="164.9" y2="164.9" stroke="#333" stroke-width="1"/>
<text x="16.2" y="167.9" font-family="Liberation Sans" font-size="8.3" fill="#3c3c3c" text-anchor="end">6</text>
<line x1="17.7" x2="21.7" y1="142.9" y2="142.9" stroke="#333" stroke-width="1"/>
<text x="16.2" y="145.9" font-family="Liberation Sans" font-size="8.3" fill="#3c3c3c" text-anchor="end">8</text>
<line x1="17.7" x2="21.7" y1="120.8" y2="120.8" stroke="#333" stroke-width="1"/>
<text x="16.2" y="123.8" font-family="Liberation Sans" font-size="8.3" fill="#3c3c3c" text-anchor="end">10</text>
<line x1="17.7" x2="21.7" y1="98.8" y2="98.8" stroke="#333" stroke-width="1"/>
<text x="16.2" y="101.8" font-family="Liberation Sans" font-size="8.3" fill="#3c3c3c" text-anchor="end">12</text>
<line x1="17.7" x2="21.7" y1="76.7" y2="76.7" stroke="#333" stroke-width="1"/>
<text x="16.2" y="79.7" font-family="Liberation Sans" font-size="8.3" fill="#3c3c3c" text-anchor="end">14</text>
<line x1="17.7" x2="21.7" y1="54.6" y2="54.6" stroke="#333" stroke-width="1"/>
<text x="16.2" y="57.6" font-family="Liberation Sans" font-size="8.3" fill="#3c3c3c" text-anchor="end">16</text>
<line x1="17.7" x2="21.7" y1="32.6" y2="32.6" stroke="#333" stroke-width="1"/>
<text x="16.2" y="35.6" font-family="Liberation Sans" font-size="8.3" fill="#3c3c3c" text-anchor="end">18</text>
<line x1="17.7" x2="21.7" y1="10.5" y2="10.5" stroke="#333" stroke-width="1"/>
<text x="16.2" y="13.5" font-family="Liberation Sans" font-size="8.3" fill="#3c3c3c" text-anchor="end">20</text>
<line x1="21.8" x2="21.8" y1="192" y2="194" stroke="#333" stroke-width="1"/>
<line x1="31.2" x2="31.2" y1="192" y2="194" stroke="#333" stroke-width="1"/>
<line x1="40.6" x2="40.6" y1="192" y2="194" stroke="#333" stroke-width="1"/>
<line x1="50.0" x2="50.0" y1="192" y2="194" stroke="#333" stroke-width="1"/>
<line x1="59.5" x2="59.5" y1="192" y2="194" stroke="#333" stroke-width="1"/>
<line x1="68.9" x2="68.9" y1="192" y2="194" stroke="#333" stroke-width="1"/>
<line x1="78.3" x2="78.3" y1="192" y2="194" stroke="#333" stroke-width="1"/>
<line x1="87.7" x2="87.7" y1="192" y2="194" stroke="#333" stroke-width="1"/>
<line x1="97.1" x2="97.1" y1="192" y2="194" stroke="#333" stroke-width="1"/>
<line x1="106.5" x2="106.5" y1="192" y2="194" stroke="#333" stroke-width="1"/>
<line x1="116.0" x2="116.0" y1="192" y2="194" stroke="#333" stroke-width="1"/>
<line x1="125.4" x2="125.4" y1="192" y2="194" stroke="#333" stroke-width="1"/>
<line x1="134.8" x2="134.8" y1="192" y2="194" stroke="#333" stroke-width="1"/>
<line x1="144.2" x2="144.2" y1="192" y2="194" stroke="#333" stroke-width="1"/>
<line x1="153.6" x2="153.6" y1="192" y2="194" stroke="#333" stroke-width="1"/>
<line x1="163.0" x2="163.0" y1="192" y2="194" stroke="#333" stroke-width="1"/>
<line x1="172.4" x2="172.4" y1="192" y2="194" stroke="#333" stroke-width="1"/>
<line x1="181.9" x2="181.9" y1="192" y2="194" stroke="#333" stroke-width="1"/>
<line x1="191.3" x2="191.3" y1="192" y2="194" stroke="#333" stroke-width="1"/>
<line x1="200.7" x2="200.7" y1="192" y2="194" stroke="#333" stroke-width="1"/>
<line x1="210.1" x2="210.1" y1="192" y2="194" stroke="#333" stroke-width="1"/>
<line x1="219.5" x2="219.5" y1="192" y2="194" stroke="#333" stroke-width="1"/>
<line x1="228.9" x2="228.9" y1="192" y2="194" stroke="#333" stroke-width="1"/>
<line x1="238.3" x2="238.3" y1="192" y2="194" stroke="#333" stroke-width="1"/>
<line x1="247.8" x2="247.8" y1="192" y2="194" stroke="#333" stroke-width="1"/>
<line x1="257.2" x2="257.2" y1="192" y2="194" stroke="#333" stroke-width="1"/>
<line x1="266.6" x2="266.6" y1="192" y2="194" stroke="#333" stroke-width="1"/>
<line x1="276.0" x2="276.0" y1="192" y2="194" stroke="#333" stroke-width="1"/>
<line x1="285.4" x2="285.4" y1="192" y2="194" stroke="#333" stroke-width="1"/>
<line x1="294.8" x2="294.8" y1="192" y2="194" stroke="#333" stroke-width="1"/>
<line x1="304.2" x2="304.2" y1="192" y2="194" stroke="#333" stroke-width="1"/>
<line x1="313.7" x2="313.7" y1="192" y2="194" stroke="#333" stroke-width="1"/>
<line x1="323.1" x2="323.1" y1="192" y2="194" stroke="#333" stroke-width="1"/>
<line x1="332.5" x2="332.5" y1="192" y2="194" stroke="#333" stroke-width="1"/>
<line x1="341.9" x2="341.9" y1="192" y2="194" stroke="#333" stroke-width="1"/>
<line x1="351.3" x2="351.3" y1="192" y2="194" stroke="#333" stroke-width="1"/>
<line x1="21.8" x2="21.8" y1="192" y2="196" stroke="#333" stroke-width="1"/>
<text x="21.8" y="203.5" font-family="Liberation Sans" font-size="8.3" fill="#3c3c3c" text-anchor="middle">0</text>
<line x1="68.9" x2="68.9" y1="192" y2="196" stroke="#333" stroke-width="1"/>
<text x="68.9" y="203.5" font-family="Liberation Sans" font-size="8.3" fill="#3c3c3c" text-anchor="middle">50</text>
<line x1="116.0" x2="116.0" y1="192" y2="196" stroke="#333" stroke-width="1"/>
<text x="116.0" y="203.5" font-family="Liberation Sans" font-size="8.3" fill="#3c3c3c" text-anchor="middle">100</text>
<line x1="163.0" x2="163.0" y1="192" y2="196" stroke="#333" stroke-width="1"/>
<text x="163.0" y="203.5" font-family="Liberation Sans" font-size="8.3" fill="#3c3c3c" text-anchor="middle">150</text>
<line x1="210.1" x2="210.1" y1="192" y2="196" stroke="#333" stroke-width="1"/>
<text x="210.1" y="203.5" font-family="Liberation Sans" font-size="8.3" fill="#3c3c3c" text-anchor="middle">200</text>
<line x1="257.2" x2="257.2" y1="192" y2="196" stroke="#333" stroke-width="1"/>
<text x="257.2" y="203.5" font-family="Liberation Sans" font-size="8.3" fill="#3c3c3c" text-anchor="middle">250</text>
<line x1="304.2" x2="304.2" y1="192" y2="196" stroke="#333" stroke-width="1"/>
<text x="304.2" y="203.5" font-family="Liberation Sans" font-size="8.3" fill="#3c3c3c" text-anchor="middle">300</text>
<line x1="351.3" x2="351.3" y1="192" y2="196" stroke="#333" stroke-width="1"/>
<text x="351.3" y="203.5" font-family="Liberation Sans" font-size="8.3" fill="#3c3c3c" text-anchor="middle">350</text>
<rect x="26.5" y="14.8" width="65.5" height="18" fill="#555" opacity="0.55"/>
<rect x="25.5" y="13.8" width="65.5" height="18" fill="#f2ee1e" stroke="#6b6a22" stroke-width="1"/>
<text x="58.25" y="25.400000000000002" font-family="Liberation Sans" font-size="8" fill="#111" text-anchor="middle">Amps per gauge</text>
</svg>
<svg class="a" style="left:409px;top:318px" width="371" height="210">
<line x1="26.6" x2="361.7" y1="191.5" y2="191.5" stroke="#ebebeb" stroke-width="1"/>
<line x1="26.6" x2="361.7" y1="173.4" y2="173.4" stroke="#ebebeb" stroke-width="1"/>
<line x1="26.6" x2="361.7" y1="155.3" y2="155.3" stroke="#ebebeb" stroke-width="1"/>
<line x1="26.6" x2="361.7" y1="137.2" y2="137.2" stroke="#ebebeb" stroke-width="1"/>
<line x1="26.6" x2="361.7" y1="119.1" y2="119.1" stroke="#ebebeb" stroke-width="1"/>
<line x1="26.6" x2="361.7" y1="101.0" y2="101.0" stroke="#ebebeb" stroke-width="1"/>
<line x1="26.6" x2="361.7" y1="82.9" y2="82.9" stroke="#ebebeb" stroke-width="1"/>
<line x1="26.6" x2="361.7" y1="64.8" y2="64.8" stroke="#ebebeb" stroke-width="1"/>
<line x1="26.6" x2="361.7" y1="46.7" y2="46.7" stroke="#ebebeb" stroke-width="1"/>
<line x1="26.6" x2="361.7" y1="28.6" y2="28.6" stroke="#ebebeb" stroke-width="1"/>
<line x1="26.6" x2="361.7" y1="10.5" y2="10.5" stroke="#ebebeb" stroke-width="1"/>
<line x1="26.5" x2="26.5" y1="11" y2="192" stroke="#ebebeb" stroke-width="1"/>
<line x1="73.0" x2="73.0" y1="11" y2="192" stroke="#ebebeb" stroke-width="1"/>
<line x1="119.5" x2="119.5" y1="11" y2="192" stroke="#ebebeb" stroke-width="1"/>
<line x1="166.0" x2="166.0" y1="11" y2="192" stroke="#ebebeb" stroke-width="1"/>
<line x1="212.5" x2="212.5" y1="11" y2="192" stroke="#ebebeb" stroke-width="1"/>
<line x1="259.0" x2="259.0" y1="11" y2="192" stroke="#ebebeb" stroke-width="1"/>
<line x1="305.5" x2="305.5" y1="11" y2="192" stroke="#ebebeb" stroke-width="1"/>
<line x1="352.0" x2="352.0" y1="11" y2="192" stroke="#ebebeb" stroke-width="1"/>
<path d="M26.5,123.4 L35.8,123.3 L45.1,123.2 L54.4,123.1 L63.7,123.0 L73.0,122.9 L82.3,122.8 L91.6,122.6 L100.9,122.5 L110.2,122.4 L119.5,122.3 L128.8,122.2 L138.1,122.1 L147.4,122.0 L156.7,121.9 L166.0,121.7 L175.3,121.6 L184.6,121.5 L193.9,121.4 L203.2,121.3 L212.5,121.2 L221.8,121.1 L231.1,120.9 L240.4,120.8 L249.7,120.7 L259.0,120.6 L268.3,120.5 L277.6,120.4 L286.9,120.3 L296.2,120.1 L305.5,120.0 L314.8,119.9 L324.1,119.8 L333.4,119.7 L342.7,119.6 L352.0,119.5" fill="none" stroke="#f2c9a0" stroke-width="1.2" stroke-linejoin="round"/>
<path d="M26.5,131.4 L35.8,131.3 L45.1,131.2 L54.4,131.1 L63.7,131.0 L73.0,130.9 L82.3,130.8 L91.6,130.6 L100.9,130.5 L110.2,130.4 L119.5,130.3 L128.8,130.2 L138.1,130.1 L147.4,130.0 L156.7,129.9 L166.0,129.8 L175.3,129.7 L184.6,129.6 L193.9,129.5 L203.2,129.3 L212.5,129.2 L221.8,129.1 L231.1,129.0 L240.4,128.9 L249.7,128.8 L259.0,128.7 L268.3,128.6 L277.6,128.5 L286.9,128.4 L296.2,128.3 L305.5,128.2 L314.8,128.0 L324.1,127.9 L333.4,127.8 L342.7,127.7 L352.0,127.6" fill="none" stroke="#92b4d4" stroke-width="1.2" stroke-linejoin="round"/>
<path d="M26.5,148.8 L35.8,148.7 L45.1,148.6 L54.4,148.6 L63.7,148.5 L73.0,148.4 L82.3,148.3 L91.6,148.3 L100.9,148.2 L110.2,148.1 L119.5,148.1 L128.8,148.0 L138.1,147.9 L147.4,147.8 L156.7,147.8 L166.0,147.7 L175.3,147.6 L184.6,147.6 L193.9,147.5 L203.2,147.4 L212.5,147.3 L221.8,147.3 L231.1,147.2 L240.4,147.1 L249.7,147.0 L259.0,147.0 L268.3,146.9 L277.6,146.8 L286.9,146.8 L296.2,146.7 L305.5,146.6 L314.8,146.5 L324.1,146.5 L333.4,146.4 L342.7,146.3 L352.0,146.2" fill="none" stroke="#94c494" stroke-width="1.2" stroke-linejoin="round"/>
<line x1="26.6" x2="361.7" y1="11" y2="11" stroke="#6e6e6e" stroke-width="1.5"/>
<line x1="361.7" x2="361.7" y1="11" y2="192" stroke="#6e6e6e" stroke-width="1"/>
<line x1="26.6" x2="26.6" y1="11" y2="193" stroke="#222" stroke-width="2"/>
<line x1="25.6" x2="361.7" y1="192" y2="192" stroke="#222" stroke-width="2"/>
<line x1="24.6" x2="26.6" y1="191.5" y2="191.5" stroke="#333" stroke-width="1"/>
<line x1="24.6" x2="26.6" y1="187.9" y2="187.9" stroke="#333" stroke-width="1"/>
<line x1="24.6" x2="26.6" y1="184.3" y2="184.3" stroke="#333" stroke-width="1"/>
<line x1="24.6" x2="26.6" y1="180.6" y2="180.6" stroke="#333" stroke-width="1"/>
<line x1="24.6" x2="26.6" y1="177.0" y2="177.0" stroke="#333" stroke-width="1"/>
<line x1="24.6" x2="26.6" y1="173.4" y2="173.4" stroke="#333" stroke-width="1"/>
<line x1="24.6" x2="26.6" y1="169.8" y2="169.8" stroke="#333" stroke-width="1"/>
<line x1="24.6" x2="26.6" y1="166.2" y2="166.2" stroke="#333" stroke-width="1"/>
<line x1="24.6" x2="26.6" y1="162.5" y2="162.5" stroke="#333" stroke-width="1"/>
<line x1="24.6" x2="26.6" y1="158.9" y2="158.9" stroke="#333" stroke-width="1"/>
<line x1="24.6" x2="26.6" y1="155.3" y2="155.3" stroke="#333" stroke-width="1"/>
<line x1="24.6" x2="26.6" y1="151.7" y2="151.7" stroke="#333" stroke-width="1"/>
<line x1="24.6" x2="26.6" y1="148.1" y2="148.1" stroke="#333" stroke-width="1"/>
<line x1="24.6" x2="26.6" y1="144.4" y2="144.4" stroke="#333" stroke-width="1"/>
<line x1="24.6" x2="26.6" y1="140.8" y2="140.8" stroke="#333" stroke-width="1"/>
<line x1="24.6" x2="26.6" y1="137.2" y2="137.2" stroke="#333" stroke-width="1"/>
<line x1="24.6" x2="26.6" y1="133.6" y2="133.6" stroke="#333" stroke-width="1"/>
<line x1="24.6" x2="26.6" y1="130.0" y2="130.0" stroke="#333" stroke-width="1"/>
<line x1="24.6" x2="26.6" y1="126.3" y2="126.3" stroke="#333" stroke-width="1"/>
<line x1="24.6" x2="26.6" y1="122.7" y2="122.7" stroke="#333" stroke-width="1"/>
<line x1="24.6" x2="26.6" y1="119.1" y2="119.1" stroke="#333" stroke-width="1"/>
<line x1="24.6" x2="26.6" y1="115.5" y2="115.5" stroke="#333" stroke-width="1"/>
<line x1="24.6" x2="26.6" y1="111.9" y2="111.9" stroke="#333" stroke-width="1"/>
<line x1="24.6" x2="26.6" y1="108.2" y2="108.2" stroke="#333" stroke-width="1"/>
<line x1="24.6" x2="26.6" y1="104.6" y2="104.6" stroke="#333" stroke-width="1"/>
<line x1="24.6" x2="26.6" y1="101.0" y2="101.0" stroke="#333" stroke-width="1"/>
<line x1="24.6" x2="26.6" y1="97.4" y2="97.4" stroke="#333" stroke-width="1"/>
<line x1="24.6" x2="26.6" y1="93.8" y2="93.8" stroke="#333" stroke-width="1"/>
<line x1="24.6" x2="26.6" y1="90.1" y2="90.1" stroke="#333" stroke-width="1"/>
<line x1="24.6" x2="26.6" y1="86.5" y2="86.5" stroke="#333" stroke-width="1"/>
<line x1="24.6" x2="26.6" y1="82.9" y2="82.9" stroke="#333" stroke-width="1"/>
<line x1="24.6" x2="26.6" y1="79.3" y2="79.3" stroke="#333" stroke-width="1"/>
<line x1="24.6" x2="26.6" y1="75.7" y2="75.7" stroke="#333" stroke-width="1"/>
<line x1="24.6" x2="26.6" y1="72.0" y2="72.0" stroke="#333" stroke-width="1"/>
<line x1="24.6" x2="26.6" y1="68.4" y2="68.4" stroke="#333" stroke-width="1"/>
<line x1="24.6" x2="26.6" y1="64.8" y2="64.8" stroke="#333" stroke-width="1"/>
<line x1="24.6" x2="26.6" y1="61.2" y2="61.2" stroke="#333" stroke-width="1"/>
<line x1="24.6" x2="26.6" y1="57.6" y2="57.6" stroke="#333" stroke-width="1"/>
<line x1="24.6" x2="26.6" y1="53.9" y2="53.9" stroke="#333" stroke-width="1"/>
<line x1="24.6" x2="26.6" y1="50.3" y2="50.3" stroke="#333" stroke-width="1"/>
<line x1="24.6" x2="26.6" y1="46.7" y2="46.7" stroke="#333" stroke-width="1"/>
<line x1="24.6" x2="26.6" y1="43.1" y2="43.1" stroke="#333" stroke-width="1"/>
<line x1="24.6" x2="26.6" y1="39.5" y2="39.5" stroke="#333" stroke-width="1"/>
<line x1="24.6" x2="26.6" y1="35.8" y2="35.8" stroke="#333" stroke-width="1"/>
<line x1="24.6" x2="26.6" y1="32.2" y2="32.2" stroke="#333" stroke-width="1"/>
<line x1="24.6" x2="26.6" y1="28.6" y2="28.6" stroke="#333" stroke-width="1"/>
<line x1="24.6" x2="26.6" y1="25.0" y2="25.0" stroke="#333" stroke-width="1"/>
<line x1="24.6" x2="26.6" y1="21.4" y2="21.4" stroke="#333" stroke-width="1"/>
<line x1="24.6" x2="26.6" y1="17.7" y2="17.7" stroke="#333" stroke-width="1"/>
<line x1="24.6" x2="26.6" y1="14.1" y2="14.1" stroke="#333" stroke-width="1"/>
<line x1="24.6" x2="26.6" y1="10.5" y2="10.5" stroke="#333" stroke-width="1"/>
<line x1="22.6" x2="26.6" y1="191.5" y2="191.5" stroke="#333" stroke-width="1"/>
<text x="21.1" y="194.5" font-family="Liberation Sans" font-size="8.3" fill="#3c3c3c" text-anchor="end">20</text>
<line x1="22.6" x2="26.6" y1="173.4" y2="173.4" stroke="#333" stroke-width="1"/>
<text x="21.1" y="176.4" font-family="Liberation Sans" font-size="8.3" fill="#3c3c3c" text-anchor="end">30</text>
<line x1="22.6" x2="26.6" y1="155.3" y2="155.3" stroke="#333" stroke-width="1"/>
<text x="21.1" y="158.3" font-family="Liberation Sans" font-size="8.3" fill="#3c3c3c" text-anchor="end">40</text>
<line x1="22.6" x2="26.6" y1="137.2" y2="137.2" stroke="#333" stroke-width="1"/>
<text x="21.1" y="140.2" font-family="Liberation Sans" font-size="8.3" fill="#3c3c3c" text-anchor="end">50</text>
<line x1="22.6" x2="26.6" y1="119.1" y2="119.1" stroke="#333" stroke-width="1"/>
<text x="21.1" y="122.1" font-family="Liberation Sans" font-size="8.3" fill="#3c3c3c" text-anchor="end">60</text>
<line x1="22.6" x2="26.6" y1="101.0" y2="101.0" stroke="#333" stroke-width="1"/>
<text x="21.1" y="104.0" font-family="Liberation Sans" font-size="8.3" fill="#3c3c3c" text-anchor="end">70</text>
<line x1="22.6" x2="26.6" y1="82.9" y2="82.9" stroke="#333" stroke-width="1"/>
<text x="21.1" y="85.9" font-family="Liberation Sans" font-size="8.3" fill="#3c3c3c" text-anchor="end">80</text>
<line x1="22.6" x2="26.6" y1="64.8" y2="64.8" stroke="#333" stroke-width="1"/>
<text x="21.1" y="67.8" font-family="Liberation Sans" font-size="8.3" fill="#3c3c3c" text-anchor="end">90</text>
<line x1="22.6" x2="26.6" y1="46.7" y2="46.7" stroke="#333" stroke-width="1"/>
<text x="21.1" y="49.7" font-family="Liberation Sans" font-size="8.3" fill="#3c3c3c" text-anchor="end">100</text>
<line x1="22.6" x2="26.6" y1="28.6" y2="28.6" stroke="#333" stroke-width="1"/>
<text x="21.1" y="31.6" font-family="Liberation Sans" font-size="8.3" fill="#3c3c3c" text-anchor="end">110</text>
<line x1="22.6" x2="26.6" y1="10.5" y2="10.5" stroke="#333" stroke-width="1"/>
<text x="21.1" y="13.5" font-family="Liberation Sans" font-size="8.3" fill="#3c3c3c" text-anchor="end">120</text>
<line x1="26.5" x2="26.5" y1="192" y2="194" stroke="#333" stroke-width="1"/>
<line x1="35.8" x2="35.8" y1="192" y2="194" stroke="#333" stroke-width="1"/>
<line x1="45.1" x2="45.1" y1="192" y2="194" stroke="#333" stroke-width="1"/>
<line x1="54.4" x2="54.4" y1="192" y2="194" stroke="#333" stroke-width="1"/>
<line x1="63.7" x2="63.7" y1="192" y2="194" stroke="#333" stroke-width="1"/>
<line x1="73.0" x2="73.0" y1="192" y2="194" stroke="#333" stroke-width="1"/>
<line x1="82.3" x2="82.3" y1="192" y2="194" stroke="#333" stroke-width="1"/>
<line x1="91.6" x2="91.6" y1="192" y2="194" stroke="#333" stroke-width="1"/>
<line x1="100.9" x2="100.9" y1="192" y2="194" stroke="#333" stroke-width="1"/>
<line x1="110.2" x2="110.2" y1="192" y2="194" stroke="#333" stroke-width="1"/>
<line x1="119.5" x2="119.5" y1="192" y2="194" stroke="#333" stroke-width="1"/>
<line x1="128.8" x2="128.8" y1="192" y2="194" stroke="#333" stroke-width="1"/>
<line x1="138.1" x2="138.1" y1="192" y2="194" stroke="#333" stroke-width="1"/>
<line x1="147.4" x2="147.4" y1="192" y2="194" stroke="#333" stroke-width="1"/>
<line x1="156.7" x2="156.7" y1="192" y2="194" stroke="#333" stroke-width="1"/>
<line x1="166.0" x2="166.0" y1="192" y2="194" stroke="#333" stroke-width="1"/>
<line x1="175.3" x2="175.3" y1="192" y2="194" stroke="#333" stroke-width="1"/>
<line x1="184.6" x2="184.6" y1="192" y2="194" stroke="#333" stroke-width="1"/>
<line x1="193.9" x2="193.9" y1="192" y2="194" stroke="#333" stroke-width="1"/>
<line x1="203.2" x2="203.2" y1="192" y2="194" stroke="#333" stroke-width="1"/>
<line x1="212.5" x2="212.5" y1="192" y2="194" stroke="#333" stroke-width="1"/>
<line x1="221.8" x2="221.8" y1="192" y2="194" stroke="#333" stroke-width="1"/>
<line x1="231.1" x2="231.1" y1="192" y2="194" stroke="#333" stroke-width="1"/>
<line x1="240.4" x2="240.4" y1="192" y2="194" stroke="#333" stroke-width="1"/>
<line x1="249.7" x2="249.7" y1="192" y2="194" stroke="#333" stroke-width="1"/>
<line x1="259.0" x2="259.0" y1="192" y2="194" stroke="#333" stroke-width="1"/>
<line x1="268.3" x2="268.3" y1="192" y2="194" stroke="#333" stroke-width="1"/>
<line x1="277.6" x2="277.6" y1="192" y2="194" stroke="#333" stroke-width="1"/>
<line x1="286.9" x2="286.9" y1="192" y2="194" stroke="#333" stroke-width="1"/>
<line x1="296.2" x2="296.2" y1="192" y2="194" stroke="#333" stroke-width="1"/>
<line x1="305.5" x2="305.5" y1="192" y2="194" stroke="#333" stroke-width="1"/>
<line x1="314.8" x2="314.8" y1="192" y2="194" stroke="#333" stroke-width="1"/>
<line x1="324.1" x2="324.1" y1="192" y2="194" stroke="#333" stroke-width="1"/>
<line x1="333.4" x2="333.4" y1="192" y2="194" stroke="#333" stroke-width="1"/>
<line x1="342.7" x2="342.7" y1="192" y2="194" stroke="#333" stroke-width="1"/>
<line x1="352.0" x2="352.0" y1="192" y2="194" stroke="#333" stroke-width="1"/>
<line x1="26.5" x2="26.5" y1="192" y2="196" stroke="#333" stroke-width="1"/>
<text x="26.5" y="203.5" font-family="Liberation Sans" font-size="8.3" fill="#3c3c3c" text-anchor="middle">0</text>
<line x1="73.0" x2="73.0" y1="192" y2="196" stroke="#333" stroke-width="1"/>
<text x="73.0" y="203.5" font-family="Liberation Sans" font-size="8.3" fill="#3c3c3c" text-anchor="middle">50</text>
<line x1="119.5" x2="119.5" y1="192" y2="196" stroke="#333" stroke-width="1"/>
<text x="119.5" y="203.5" font-family="Liberation Sans" font-size="8.3" fill="#3c3c3c" text-anchor="middle">100</text>
<line x1="166.0" x2="166.0" y1="192" y2="196" stroke="#333" stroke-width="1"/>
<text x="166.0" y="203.5" font-family="Liberation Sans" font-size="8.3" fill="#3c3c3c" text-anchor="middle">150</text>
<line x1="212.5" x2="212.5" y1="192" y2="196" stroke="#333" stroke-width="1"/>
<text x="212.5" y="203.5" font-family="Liberation Sans" font-size="8.3" fill="#3c3c3c" text-anchor="middle">200</text>
<line x1="259.0" x2="259.0" y1="192" y2="196" stroke="#333" stroke-width="1"/>
<text x="259.0" y="203.5" font-family="Liberation Sans" font-size="8.3" fill="#3c3c3c" text-anchor="middle">250</text>
<line x1="305.5" x2="305.5" y1="192" y2="196" stroke="#333" stroke-width="1"/>
<text x="305.5" y="203.5" font-family="Liberation Sans" font-size="8.3" fill="#3c3c3c" text-anchor="middle">300</text>
<line x1="352.0" x2="352.0" y1="192" y2="196" stroke="#333" stroke-width="1"/>
<text x="352.0" y="203.5" font-family="Liberation Sans" font-size="8.3" fill="#3c3c3c" text-anchor="middle">350</text>
<rect x="31.5" y="15" width="56.5" height="18" fill="#555" opacity="0.55"/>
<rect x="30.5" y="14" width="56.5" height="18" fill="#f2ee1e" stroke="#6b6a22" stroke-width="1"/>
<text x="58.75" y="25.6" font-family="Liberation Sans" font-size="8" fill="#111" text-anchor="middle">Temperatures</text>
</svg>
<svg class="a" style="left:680px;top:480px" width="120" height="68"><g opacity="0.4" fill="#a4a4a4" stroke="#a4a4a4" font-family="Liberation Sans" font-weight="bold"><text x="9" y="45" font-size="43" stroke-width="2">C</text><text x="30" y="32" font-size="19.5" stroke-width="0.6">omputer</text><text x="26" y="57.7" font-size="32" stroke-width="1.5" transform="translate(26,57.7) scale(1.2,1) translate(-26,-57.7)">B</text><text x="51.5" y="46.5" font-size="19" stroke-width="0.6">ase</text></g></svg>
</body></html>
